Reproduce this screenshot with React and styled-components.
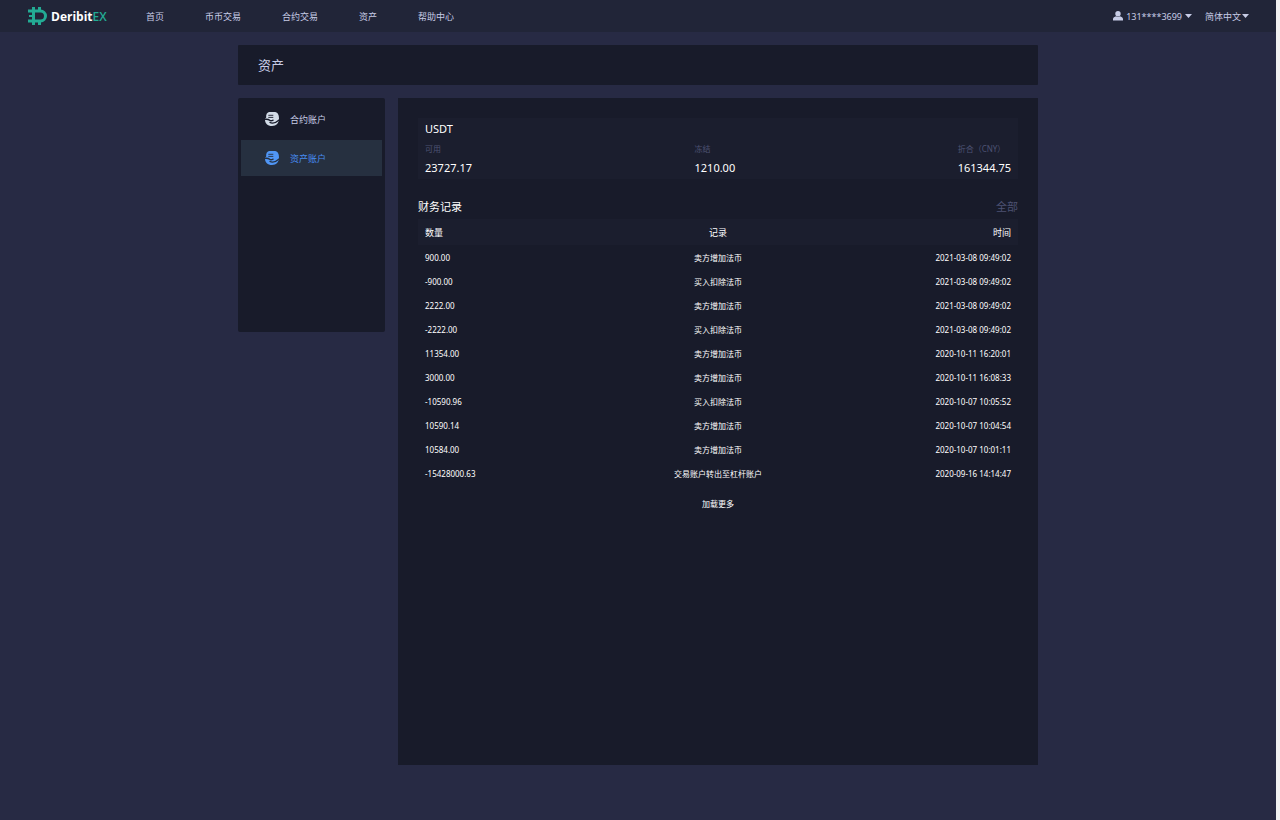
import React from 'react'
import styled, { createGlobalStyle } from 'styled-components'

const GlobalStyle = createGlobalStyle`
  * {
    box-sizing: border-box;
  }
  body {
    margin: 0;
    background: #272a44;
    font-family: "Noto Sans", "Noto Sans CJK SC", sans-serif;
    color: #fff;
  }
  a {
    color: inherit;
    text-decoration: none;
  }
`

const Page = styled.div`
  min-height: 100vh;
  border-right: 4px solid #f1f1f1;
`

const Header = styled.header`
  display: flex;
  align-items: center;
  height: 32px;
  padding: 0 27px;
  background: #212538;
  color: #c7cce6;
  font-size: 9px;
`

const Logo = styled.a`
  display: flex;
  align-items: center;
  gap: 4px;
  width: 119px;
  color: #fff;
  font-family: "Open Sans", sans-serif;
  font-size: 12px;
  font-weight: 700;
`

const Green = styled.span`
  color: #23ab94;
  font-weight: 600;
`

const Nav = styled.nav`
  display: flex;
  flex: 1;
  gap: 41px;
`

const UserButton = styled.button`
  display: flex;
  align-items: center;
  gap: 3px;
  margin-right: 13px;
  padding: 0;
  border: 0;
  background: none;
  color: inherit;
  font: inherit;
`

const Language = styled.label`
  display: flex;
  align-items: center;
`

const LanguageSelect = styled.select`
  appearance: none;
  width: 37px;
  padding: 0;
  border: 0;
  background: none;
  color: inherit;
  font: inherit;
`

const Container = styled.main`
  max-width: 800px;
  margin: 0 auto;
  padding: 13px 0 54px;
`

const TitleBar = styled.h1`
  margin: 0 0 13px;
  padding: 0 20px;
  border-radius: 1px;
  background: #181b2a;
  color: #c7cce6;
  font-size: 13px;
  font-weight: 400;
  line-height: 40px;
`

const Columns = styled.div`
  display: flex;
  align-items: flex-start;
  gap: 13px;
`

const Sidebar = styled.aside`
  flex: 0 0 147px;
  min-height: 234px;
  padding: 3px;
  border-radius: 2px;
  background: #181b2a;
`

const SideLink = styled.a`
  display: flex;
  align-items: center;
  gap: 10px;
  height: 36px;
  margin-bottom: 3px;
  padding-left: 24px;
  background: ${props => (props.$active ? '#263040' : '#181b2a')};
  color: ${props => (props.$active ? '#478cf0' : '#c7cce6')};
  font-size: 9px;

  svg {
    fill: ${props => (props.$active ? '#5096f5' : '#d3dce8')};
    stroke: ${props => (props.$active ? '#263040' : '#181b2a')};
  }
`

const Content = styled.section`
  flex: 1;
  min-height: 667px;
  padding: 20px;
  background: #181b2a;
`

const Balance = styled.div`
  padding: 2px 7px;
  background: #1b1e2e;
`

const Coin = styled.div`
  padding-bottom: 1px;
  font-size: 11px;
  line-height: 18px;
`

const Amounts = styled.dl`
  display: flex;
  justify-content: space-between;
  margin: 0;
`

const Label = styled.dt`
  color: #4d5273;
  font-size: 8px;
  line-height: 20px;
`

const Value = styled.dd`
  margin: 0;
  font-size: 11px;
  line-height: 18px;
`

const RecordsHead = styled.div`
  display: flex;
  align-items: center;
  justify-content: space-between;
  height: 26px;
  margin-top: 14px;
  font-size: 11px;
`

const RecordsTitle = styled.h2`
  margin: 0;
  font-size: 11px;
  font-weight: 400;
`

const AllLink = styled.a`
  color: #4d5273;
`

const Table = styled.table`
  width: 100%;
  table-layout: fixed;
  border-collapse: collapse;
  font-size: 8px;

  th {
    height: 26px;
    background: #1b1e2e;
    font-size: 9px;
    font-weight: 400;
  }
  td {
    height: 24px;
  }
  th, td {
    padding: 0 7px;
    text-align: center;
  }
  th:first-child, td:first-child {
    text-align: left;
  }
  th:last-child, td:last-child {
    text-align: right;
  }
`

const MoreButton = styled.button`
  display: block;
  margin: 12px auto 0;
  padding: 0;
  border: 0;
  background: none;
  color: inherit;
  font: inherit;
  font-size: 8px;
  line-height: 14px;
`

const navItems = ['首页', '币币交易', '合约交易', '资产', '帮助中心']

const balances = [
  { label: '可用', value: '23727.17' },
  { label: '冻结', value: '1210.00' },
  { label: '折合（CNY）', value: '161344.75' }
]

const records = [
  ['900.00', '卖方增加法币', '2021-03-08 09:49:02'],
  ['-900.00', '买入扣除法币', '2021-03-08 09:49:02'],
  ['2222.00', '卖方增加法币', '2021-03-08 09:49:02'],
  ['-2222.00', '买入扣除法币', '2021-03-08 09:49:02'],
  ['11354.00', '卖方增加法币', '2020-10-11 16:20:01'],
  ['3000.00', '卖方增加法币', '2020-10-11 16:08:33'],
  ['-10590.96', '买入扣除法币', '2020-10-07 10:05:52'],
  ['10590.14', '卖方增加法币', '2020-10-07 10:04:54'],
  ['10584.00', '卖方增加法币', '2020-10-07 10:01:11'],
  ['-15428000.63', '交易账户转出至杠杆账户', '2020-09-16 14:14:47']
]

const LogoMark = () => (
  <svg width="20" height="20" viewBox="0 0 20 20" fill="none" stroke="#23ab94" strokeWidth="3" aria-hidden="true">
    <path d="M1 5h12.500a5 5 0 0 1 0 10H1" />
    <path d="M6.500 1v18" />
    <path d="M12.500 1v4M12.500 15v4" />
    <path d="M2 10h4" strokeWidth="2" />
  </svg>
)

const UserIcon = () => (
  <svg width="10" height="11" viewBox="0 0 10 11" fill="currentColor" aria-hidden="true">
    <ellipse cx="5" cy="2.800" rx="2.700" ry="2.800" />
    <path d="M0 9.500V8C0 6.600 1.600 5.600 3 5.200c1 .9 3 .9 4 0 1.400.4 3 1.400 3 2.800v1.500z" />
  </svg>
)

const Caret = () => (
  <svg width="7" height="4" viewBox="0 0 7 4" fill="currentColor" aria-hidden="true">
    <path d="M0 0h7L3.500 4z" />
  </svg>
)

const AccountIcon = () => (
  <svg width="15" height="14" viewBox="0 0 15 14" aria-hidden="true">
    <path stroke="none" d="M4 0h6c3 .5 4 3 4 6.500C14 11 11.500 14 7 14S0 11.500 0 7.500c0-1 .6-1.500 1.200-2C.8 2.500 2 .5 4 0z" />
    <path fill="none" strokeWidth=".9" d="M3.300 3.300h5M3.300 5.400h5" />
    <path fill="none" strokeWidth="1.400" d="M0 7.300c2-.3 4 .3 5 1.200 1 .8 2.400 0 3.500-.5" />
    <path fill="none" strokeWidth="1.300" d="M4.500 10.300c3 1.600 6.500.6 10-2.500" />
  </svg>
)

const App = () => (
  <Page lang="zh-CN">
    <GlobalStyle />
    <Header>
      <Logo href="#">
        <LogoMark />
        <span>Deribit<Green>EX</Green></span>
      </Logo>
      <Nav>
        {navItems.map(item => <a href="#" key={item}>{item}</a>)}
      </Nav>
      <UserButton type="button">
        <UserIcon />
        131****3699
        <Caret />
      </UserButton>
      <Language>
        <LanguageSelect aria-label="语言" defaultValue="zh">
          <option value="zh">简体中文</option>
        </LanguageSelect>
        <Caret />
      </Language>
    </Header>
    <Container>
      <TitleBar>资产</TitleBar>
      <Columns>
        <Sidebar>
          <SideLink href="#"><AccountIcon />合约账户</SideLink>
          <SideLink href="#" $active><AccountIcon />资产账户</SideLink>
        </Sidebar>
        <Content>
          <Balance>
            <Coin>USDT</Coin>
            <Amounts>
              {balances.map(b => (
                <div key={b.label}>
                  <Label>{b.label}</Label>
                  <Value>{b.value}</Value>
                </div>
              ))}
            </Amounts>
          </Balance>
          <RecordsHead>
            <RecordsTitle>财务记录</RecordsTitle>
            <AllLink href="#">全部</AllLink>
          </RecordsHead>
          <Table>
            <thead>
              <tr>
                <th>数量</th>
                <th>记录</th>
                <th>时间</th>
              </tr>
            </thead>
            <tbody>
              {records.map(([amount, type, time], i) => (
                <tr key={i}>
                  <td>{amount}</td>
                  <td>{type}</td>
                  <td>{time}</td>
                </tr>
              ))}
            </tbody>
          </Table>
          <MoreButton type="button">加载更多</MoreButton>
        </Content>
      </Columns>
    </Container>
  </Page>
)

export default App
